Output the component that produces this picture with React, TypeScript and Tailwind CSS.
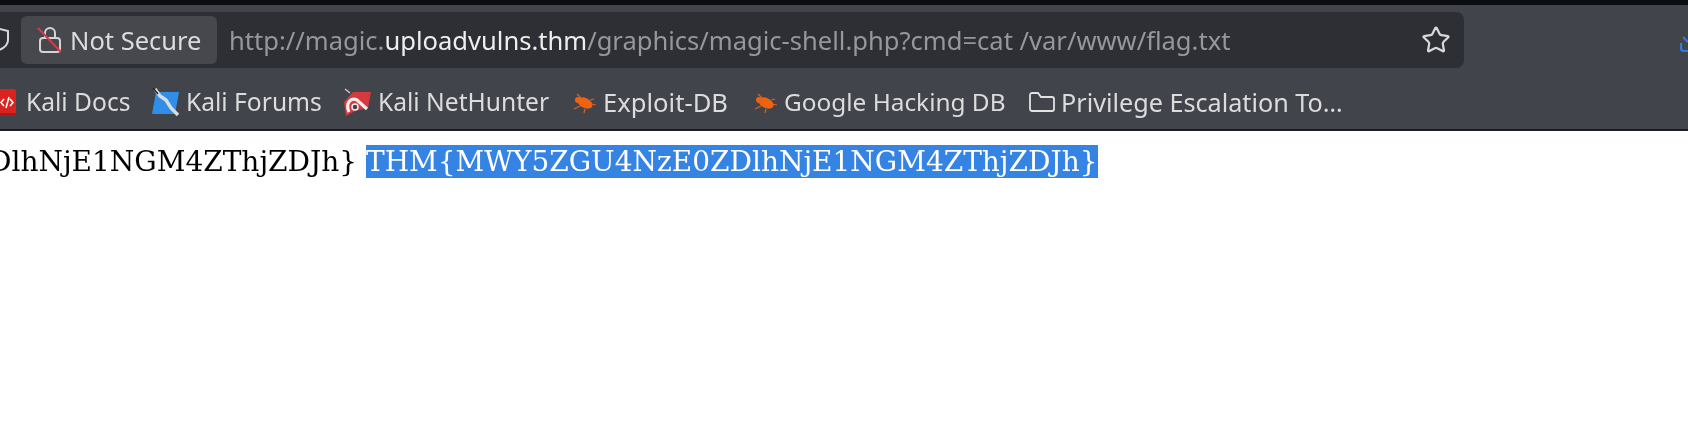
import { Star } from "lucide-react";
import type { ReactNode } from "react";

const uiFont = "[font-family:'Noto_Sans',sans-serif]";

function KaliDocsIcon() {
  return (
    <svg width="16" height="28" viewBox="0 0 16 28" className="shrink-0">
      <path d="M0 0h14a2 2 0 0 1 2 2v22H0z" fill="#d8231f" />
      <rect x="0" y="24" width="16" height="3" fill="#a51c1a" />
      <path d="M4 10l-3 3.5 3 3.5M9 8l-3 11M10 10l3 3.5-3 3.5" fill="none" stroke="#fff" strokeWidth="1.6" />
    </svg>
  );
}

function KaliForumsIcon() {
  return (
    <svg width="30" height="30" viewBox="0 0 30 30" className="shrink-0">
      <path d="M5 4h23l-4 22H1z" fill="#2f8fe8" />
      <path d="M4 1l5 7 6 4 5 8 7 7" fill="none" stroke="#dcdcdc" strokeWidth="3.4" />
      <path d="M2 0l5 6" stroke="#2b2b2b" strokeWidth="1.6" />
    </svg>
  );
}

function NetHunterIcon() {
  return (
    <svg width="30" height="30" viewBox="0 0 30 30" className="shrink-0">
      <path d="M10 4h18l-3 16-4 1-9 2-9 5-2-14z" fill="#d63a3e" />
      <path d="M6 24c-4-9 2-15 8-12l10 9" fill="none" stroke="#eee" strokeWidth="3.2" />
      <circle cx="12" cy="19" r="3" fill="#42444c" stroke="#eee" strokeWidth="1.5" />
      <path d="M2 1l5 4" stroke="#ccc" strokeWidth="1.5" />
    </svg>
  );
}

function BugIcon() {
  return (
    <svg width="28" height="26" viewBox="0 0 28 26" className="shrink-0">
      <path d="M7 4l4 4M4 19l6-3M14 23l1-4M24 9l-4 1M26 15l-5-1" stroke="#d9621c" strokeWidth="1.2" fill="none" />
      <ellipse cx="15" cy="13" rx="8" ry="5" transform="rotate(25 15 13)" fill="#ee6214" />
      <circle cx="8" cy="10" r="3" fill="#ee6214" />
    </svg>
  );
}

function FolderIcon() {
  return (
    <svg width="28" height="24" viewBox="0 0 28 24" className="shrink-0" fill="none" stroke="#e2e2e2" strokeWidth="1.8">
      <path d="M2 5a2 2 0 0 1 2-2h6l3 4h11a2 2 0 0 1 2 2v10a2 2 0 0 1-2 2H4a2 2 0 0 1-2-2z" />
    </svg>
  );
}

function Bookmark({ icon, label, className, textSize }: { icon: ReactNode; label: string; className: string; textSize: string }) {
  return (
    <div className={`flex items-center shrink-0 ${className}`}>
      {icon}
      <span className={`leading-none text-[#dcdcdd] whitespace-nowrap ${textSize}`}>{label}</span>
    </div>
  );
}

export default function App() {
  return (
    <div className={`h-[444px] w-[1688px] overflow-hidden bg-white blur-[0.4px] ${uiFont}`}>
      <div className="h-[5px] bg-[#0c0d11]" />

      {/* Toolbar */}
      <div className="h-[63px] bg-[#42444c] pt-[7px] flex">
        <div className="h-[56px] w-[1464px] bg-[#2e2f34] rounded-r-lg flex items-center">
          <svg width="10" height="26" viewBox="0 0 10 26" fill="none" stroke="#d8d8d8" strokeWidth="2" className="shrink-0">
            <path d="M-10 4l10-2 8 2v9c0 5-4 8-9 10" />
          </svg>
          <div className="ml-[11px] h-[48px] w-[196px] rounded-md bg-[#46484e] flex items-center shrink-0 pl-[16px]">
            <svg width="26" height="30" viewBox="0 0 26 30" fill="none" className="shrink-0">
              <rect x="3" y="13" width="20" height="14" rx="3" stroke="#d4d4d4" strokeWidth="2" />
              <path d="M8 13V8a5 5 0 0 1 10 0v5" stroke="#d4d4d4" strokeWidth="2" />
              <path d="M1 3l23 24" stroke="#d8384a" strokeWidth="2" />
            </svg>
            <span className="ml-[7px] pt-[2px] text-[25.5px] leading-none text-[#dcdcdd] whitespace-nowrap">Not Secure</span>
          </div>
          <div className="ml-[12px] pt-[2px] flex-1 text-[25.55px] leading-none text-[#96979a] whitespace-nowrap">
            http://magic.<span className="text-[#eeeeef]">uploadvulns.thm</span>/graphics/magic-shell.php?cmd=cat /var/www/flag.txt
          </div>
          <Star size={30} strokeWidth={1.8} className="text-[#d8d8d9] mr-[13px] shrink-0" />
        </div>
        <div className="flex-1 flex justify-end items-center pt-[8px]">
          <svg width="8" height="18" viewBox="0 0 8 18" fill="none" stroke="#2f7ae0" strokeWidth="2.2" className="shrink-0">
            <path d="M1 8v5a3 3 0 0 0 3 3h4M3 2l5 5" />
          </svg>
        </div>
      </div>

      {/* Bookmarks */}
      <div className="h-[63px] bg-[#42444c] border-b-2 border-[#1b1c20] flex items-center pt-[8px] overflow-hidden">
        <Bookmark icon={<KaliDocsIcon />} label="Kali Docs" textSize="text-[24.6px]" className="gap-[10px] w-[151px]" />
        <Bookmark icon={<KaliForumsIcon />} label="Kali Forums" textSize="text-[24.6px]" className="gap-[5px] w-[192px]" />
        <Bookmark icon={<NetHunterIcon />} label="Kali NetHunter" textSize="text-[24.6px]" className="gap-[5px] w-[227px]" />
        <Bookmark icon={<BugIcon />} label="Exploit-DB" textSize="text-[25.6px]" className="gap-[5px] w-[181px]" />
        <Bookmark icon={<BugIcon />} label="Google Hacking DB" textSize="text-[24.4px]" className="gap-[5px] w-[277px]" />
        <Bookmark icon={<FolderIcon />} label="Privilege Escalation To…" textSize="text-[25.2px]" className="gap-[5px]" />
      </div>

      {/* Page */}
      <div className="pt-[14px] text-[28px] leading-[33px] text-black whitespace-nowrap [font-family:'DejaVu_Serif',serif] ml-[-11px]">
        {"DlhNjE1NGM4ZThjZDJh} "}
        <span className="bg-[#3584e4] text-white">{"THM{MWY5ZGU4NzE0ZDlhNjE1NGM4ZThjZDJh}"}</span>
      </div>
    </div>
  );
}
